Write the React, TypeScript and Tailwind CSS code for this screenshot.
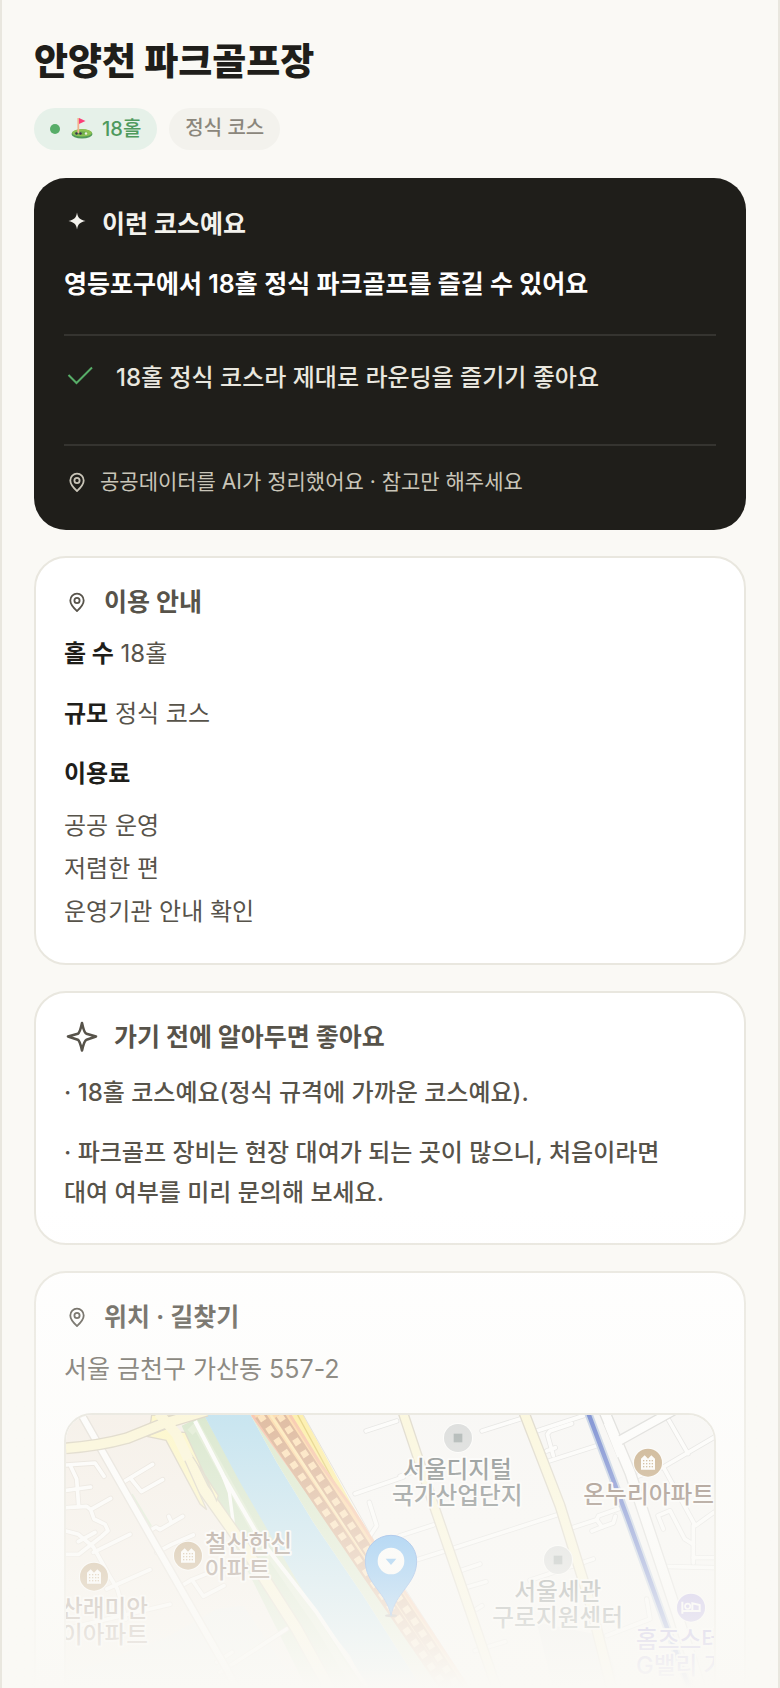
import React from 'react';

type IconProps = { className?: string };

const PinIcon = ({ className }: IconProps) => (
  <svg viewBox="0 0 26 26" fill="none" stroke="currentColor" strokeWidth="1.8" className={`h-[26px] w-[26px] shrink-0 ${className ?? ''}`} aria-hidden="true">
    <path d="M13 22c-3.2-3-6.700-6.200-6.700-10.600a6.700 6.700 0 0 1 13.400 0C19.700 15.800 16.200 19 13 22z" strokeLinejoin="round" />
    <circle cx="13" cy="11.500" r="2.600" />
  </svg>
);

const SparkIcon = () => (
  <svg viewBox="0 0 26 26" fill="currentColor" className="h-[26px] w-[26px] shrink-0" aria-hidden="true">
    <path d="M13 1.500c1 5.500 2.500 7 8.500 8.500-6 1.500-7.500 3-8.500 8.500-1-5.500-2.500-7-8.500-8.500 6-1.500 7.500-3 8.500-8.500z" />
  </svg>
);

const SparkOutlineIcon = () => (
  <svg viewBox="0 0 34 34" fill="none" stroke="currentColor" strokeWidth="2.600" strokeLinejoin="round" className="h-[34px] w-[34px] shrink-0" aria-hidden="true">
    <path d="M18 3c1.600 7.500 3.500 10.500 4.500 10.800L32 16.500l-9.500 3.200c-1.500.6-3 4-4.500 10.800-1.500-6.800-2.800-10-4.200-10.800L4 16.500l9.800-2.700C15.200 13 16.500 10 18 3z" />
  </svg>
);

const CheckIcon = () => (
  <svg viewBox="0 0 32 32" fill="none" stroke="#57ad68" strokeWidth="2" className="h-8 w-8 shrink-0" aria-hidden="true">
    <path d="M4.500 13l8 8L28 5.500" />
  </svg>
);

const GolfIcon = () => (
  <svg viewBox="0 0 24 24" className="h-6 w-6 shrink-0" aria-hidden="true">
    <ellipse cx="12" cy="17" rx="10.500" ry="4.500" fill="#4f9a58" />
    <ellipse cx="12" cy="15.800" rx="10" ry="3.700" fill="#8cc152" />
    <ellipse cx="11" cy="16" rx="6.500" ry="1.800" fill="#6fae4d" />
    <path d="M8.300 1v15" stroke="#f2b28c" strokeWidth="1.800" />
    <path d="M9 1l6.500 3L9 7z" fill="#fb3f78" />
    <circle cx="6.500" cy="16.500" r="1.200" fill="#3e3350" />
    <circle cx="10.500" cy="16.500" r="1.200" fill="#3e3350" />
    <circle cx="16" cy="16.500" r="1.200" fill="#e9efe4" />
  </svg>
);

type CardProps = {
  title: string;
  icon: React.ReactNode;
  gap?: string;
  children: React.ReactNode;
};

const Card = ({ title, icon, gap = 'gap-[14px]', children }: CardProps) => (
  <section className="rounded-[32px] border-2 border-[#e9e7df] bg-white px-7 pt-7 pb-[30px]">
    <h2 className={`flex h-8 items-center text-[25px] leading-8 font-bold text-[#57534a] ${gap}`}>
      {icon}
      {title}
    </h2>
    {children}
  </section>
);

const leftLanes = [
  'M108 618L195 612L222 652',
  'M122 622L140 660L146 742',
  'M108 694L182 684',
  'M108 746L170 742L182 752L192 780L225 796L234 815L215 832L146 886L108 886',
  'M182 752L242 718',
  'M108 816L145 826L190 864L238 950L262 990L288 1080',
  'M145 848L195 820',
  'M190 880L300 826',
  'M272 674L368 616',
  'M302 658L334 698L398 662',
  'M350 820L378 804L390 812L458 772',
  'M424 790L416 772',
  'M380 880L425 856L490 828',
  'M448 984L486 962L520 1012L582 980',
  'M486 962L540 940',
  'M230 990L360 932',
  'M108 1110L420 1036',
  'M570 1240L770 1110',
  'M560 1210L606 1180',
];

const rightLanes = [
  'M1356 516L1470 480',
  'M1008 516L1100 486',
  'M975 704L1120 654',
  'M1018 730L1040 800L1020 830',
  'M1110 652L1150 638',
  'M1110 830L1210 798',
  'M1130 912L1270 868L1580 768',
  'M1500 964L1690 900',
  'M1290 935L1350 915',
  'M1310 985L1368 968',
  'M1340 1050L1356 1040',
  'M1520 516L1660 470',
  'M1625 494L1560 516L1552 526L1570 590',
  'M1550 608L1700 560',
  'M1550 576L1576 566',
  'M1615 810L1700 782L1706 770L1770 748',
  'M1700 782L1716 804L1686 816',
  'M1716 804L1750 792L1756 772',
  'M1800 660L1900 624L2052 535',
  'M1912 476L1974 584',
  'M1902 628L1996 800L2052 760',
  'M1900 810L1884 770L1920 755L1964 840L1990 856',
  'M1990 800L1990 912',
  'M1895 922L2052 926',
  'M1990 896L2052 896',
  'M1730 1130L1860 1080L1850 1020',
  'M1335 1175L1425 1148',
];

const Lanes = ({ paths, edge, width }: { paths: string[]; edge: string; width: number }) => (
  <g fill="none" strokeLinecap="round" strokeLinejoin="round">
    {paths.map((d) => (
      <path key={d} d={d} stroke={edge} strokeWidth={width + 5} />
    ))}
    {paths.map((d) => (
      <path key={d} d={d} stroke="#fff" strokeWidth={width} />
    ))}
  </g>
);

const Road = ({ d, width, fill, edge }: { d: string; width: number; fill: string; edge: string }) => (
  <g fill="none" strokeLinejoin="round">
    <path d={d} stroke={edge} strokeWidth={width + 8} />
    <path d={d} stroke={fill} strokeWidth={width} />
  </g>
);

const ApartmentMarker = ({ x, y }: { x: number; y: number }) => (
  <g transform={`translate(${x} ${y})`}>
    <circle r="45" fill="#fff" />
    <circle r="42" fill="#ab834c" />
    <path d="M-21 21V-12L-10 -22L0 -12L10 -22L21 -12V21z" fill="#fff" />
    {[-6, 3, 12].map((row) =>
      [-13, -4, 5, 13].map((col) => <rect key={`${row}${col}`} x={col - 2} y={row - 2} width="4" height="4" fill="#ab834c" />),
    )}
  </g>
);

const PlaceMarker = ({ x, y }: { x: number; y: number }) => (
  <g transform={`translate(${x} ${y})`}>
    <circle r="45" fill="#fff" />
    <circle r="42" fill="#c8cbcc" />
    <rect x="-13" y="-13" width="26" height="26" fill="#7d8a8a" />
  </g>
);

const mapLabels = [
  { text: '서울디지털', x: 1282, y: 656, color: '#3e484a', anchor: 'middle' },
  { text: '국가산업단지', x: 1282, y: 735, color: '#3e484a', anchor: 'middle' },
  { text: '온누리아파트', x: 1856, y: 731, color: '#5e4232', anchor: 'middle' },
  { text: '철산한신', x: 525, y: 879, color: '#5e4232', anchor: 'start' },
  { text: '아파트', x: 525, y: 958, color: '#5e4232', anchor: 'start' },
  { text: '산래미안', x: 354, y: 1073, color: '#5e4232', anchor: 'end' },
  { text: '이아파트', x: 354, y: 1152, color: '#5e4232', anchor: 'end' },
  { text: '서울세관', x: 1583, y: 1022, color: '#3e484a', anchor: 'middle' },
  { text: '구로지원센터', x: 1583, y: 1101, color: '#3e484a', anchor: 'middle' },
  { text: '홈즈스테이', x: 1818, y: 1167, color: '#5a4bc4', anchor: 'start' },
  { text: 'G밸리 가산', x: 1818, y: 1246, color: '#5a4bc4', anchor: 'start' },
] as const;

const LocationMap = () => (
  <svg viewBox="108 468 1944 960" preserveAspectRatio="xMidYMin slice" className="block h-80 w-full" role="img" aria-label="안양천 파크골프장 지도">
    <rect x="108" y="468" width="1944" height="960" fill="#f7f6f5" />
    <path d="M108 468H560L1010 1428H108z" fill="#f3ebe2" />
    <path d="M108 1250L420 1130L560 1050L640 1040L900 1428H108z" fill="#e9ecea" />
    <path d="M1520 1090L1720 1130L1760 1250L1570 1290z" fill="#e4e6e8" />
    <path d="M292 716L308 704L366 800L350 816z" fill="#cfe3c2" />
    <path d="M455 500L522 468L850 1050L1010 1284L1080 1428H900L600 830z" fill="#c4dcb4" />
    <path d="M480 520L500 500L700 860L860 1090L1000 1320" fill="none" stroke="#d5e6c5" strokeWidth="22" />
    <path d="M522 468H662L740 610L850 790L1000 1010L1140 1230L1260 1428H1080L960 1190L850 1050L740 860L630 670z" fill="#a3d6ec" />
    <path d="M662 468L860 740L1000 930L1140 1130L1330 1428H1260L1140 1230L1000 1010L850 790L740 610z" fill="#cce0b8" />
    <path d="M785 468H820L1000 800L960 780z" fill="#ffe97d" />
    <path d="M820 468L1035 850L1300 1260" fill="none" stroke="#d3cfc4" strokeWidth="3" />
    <path d="M803 468L1010 850" fill="none" stroke="#d9bb3c" strokeWidth="4" />

    <Lanes paths={leftLanes} edge="#ddd5cb" width={11} />
    <Lanes paths={rightLanes} edge="#d9d9d8" width={11} />
    <Road d="M155 468L370 846L590 1230L690 1428" width={18} fill="#fff" edge="#dcd6cd" />

    <g fill="none" stroke="#fff" strokeLinejoin="round">
      <path d="M495 486L580 650L690 840L860 1060L1010 1284" strokeWidth="12" />
      <path d="M575 640L598 700L612 810" strokeWidth="10" />
      <path d="M810 660L1080 1060L1250 1310" strokeWidth="6" />
    </g>

    <Road d="M440 526L520 690L640 860L800 1110L960 1400" width={30} fill="#fdf5c3" edge="#cdc4ac" />
    <path d="M365 468L362 490L345 510L430 482L440 468z" fill="#fff6b0" stroke="#cdc4ac" strokeWidth="4" />
    <path d="M350 532L408 544L510 735L530 752L420 505zM440 520L565 710L560 725L465 520z" fill="#fff6b0" stroke="#cdc4ac" strokeWidth="4" />
    <Road d="M108 568C190 562 240 552 290 538L400 494L530 455" width={28} fill="#fcf5ca" edge="#cdc4ac" />
    <path d="M385 462L440 526L475 600" fill="none" stroke="#fcf5ca" strokeWidth="30" />

    <path d="M662 468H785L870 610L970 750L1120 990L1200 1110L1410 1428H1340L1140 1130L1000 930L860 740z" fill="#ffc982" />
    <g fill="none">
      <path d="M667 468L862 740L1002 930L1142 1130L1342 1428" stroke="#f5a585" strokeWidth="9" />
      <path d="M780 468L868 610L968 750L1118 990L1198 1110L1408 1428" stroke="#f7ab7f" strokeWidth="9" />
      <path d="M722 468L900 735L1040 940L1370 1428" stroke="#ffe19a" strokeWidth="8" />
      <path d="M690 468L1010 940L1345 1428" stroke="#cc9065" strokeWidth="34" />
      <path d="M690 468L1010 940L1345 1428" stroke="#ffd69b" strokeWidth="20" strokeDasharray="20 23" />
      <path d="M748 468L1010 870L1380 1428" stroke="#cc9065" strokeWidth="32" />
      <path d="M748 468L1010 870L1380 1428" stroke="#ffd69b" strokeWidth="20" strokeDasharray="20 23" />
    </g>

    <Road d="M1117 455L1205 720L1390 1260L1450 1428" width={24} fill="#fcf6cf" edge="#cfc8b4" />
    <Road d="M1480 455L1590 740L1680 1030L1780 1428" width={26} fill="#fcf6cf" edge="#cfc8b4" />
    <Road d="M1722 455L1800 640L1940 1060L2040 1380" width={28} fill="#fff" edge="#d0d0ce" />
    <Road d="M1768 545L1930 455" width={24} fill="#fff" edge="#cfcfcd" />
    <path d="M1735 490L1775 590" stroke="#fff" strokeWidth="28" />
    <g fill="none">
      <path d="M1672 455L1790 770L1905 1090L1990 1320" stroke="#a9bddb" strokeWidth="24" />
      <path d="M1672 455L1790 770L1905 1090L1990 1320" stroke="#2d4dbd" strokeWidth="13" />
    </g>

    <PlaceMarker x={1284} y={537} />
    <PlaceMarker x={1584} y={903} />
    <ApartmentMarker x={1854} y={611} />
    <ApartmentMarker x={474} y={890} />
    <ApartmentMarker x={192} y={953} />
    <g transform="translate(1983 1046)">
      <circle r="45" fill="#fff" />
      <circle r="42" fill="#8b7bdd" />
      <path d="M-26 -18V18M-26 10H26V-8L4 -13V10" fill="none" stroke="#fff" strokeWidth="6" />
      <circle cx="-10" cy="-4" r="8" fill="none" stroke="#fff" strokeWidth="5" />
    </g>

    <g fontSize="71" fontWeight="500" stroke="#fff" strokeWidth="11" strokeLinejoin="round" paintOrder="stroke">
      {mapLabels.map(({ text, x, y, color, anchor }) => (
        <text key={text} x={x} y={y} fill={color} textAnchor={anchor}>
          {text}
        </text>
      ))}
    </g>

    <ellipse cx="1083" cy="1070" rx="18" ry="5" fill="#77706a" />
    <path d="M1083 1070C1070 1000 1006 975 1006 906a77 77 0 0 1 154 0C1160 975 1096 1000 1083 1070z" fill="#2a95f2" stroke="#1668d8" strokeWidth="3" />
    <circle cx="1083" cy="906" r="40" fill="#fff" />
    <path d="M1067 899H1099L1083 918z" fill="#2a95f2" />
  </svg>
);

const fees = ['공공 운영', '저렴한 편', '운영기관 안내 확인'];

export default function App() {
  return (
    <div className="relative h-screen overflow-hidden border-x-2 border-[#e9e7df] bg-[#faf9f5] px-8 pt-9 font-[Inter,'Noto_Sans_CJK_KR',sans-serif] break-keep text-[#1f1e1a]">
      <header>
        <h1 className="text-[37px] leading-[52px] font-extrabold">안양천 파크골프장</h1>
        <div className="mt-5 flex gap-3 text-xl leading-10 font-medium">
          <span className="flex h-[42px] items-center gap-[10px] rounded-full bg-[#e6f1e9] px-4 text-[#4f9a5e]">
            <span className="h-[10px] w-[10px] rounded-full bg-[#57ad68]" />
            <span className="flex items-center gap-2">
              <GolfIcon />
              18홀
            </span>
          </span>
          <span className="h-[42px] rounded-full bg-[#f3f2ed] px-4 text-[#8b877c]">정식 코스</span>
        </div>
      </header>

      <main className="mt-7 flex flex-col gap-[26px]">
        <section className="rounded-[32px] bg-[#1f1e1a] px-[30px] pt-[30px] pb-8">
          <h2 className="flex h-8 items-center gap-3 text-[25px] leading-8 font-bold text-[#f3f2ed]">
            <SparkIcon />
            이런 코스예요
          </h2>
          <p className="mt-6 text-[25px] leading-10 font-semibold text-white">영등포구에서 18홀 정식 파크골프를 즐길 수 있어요</p>
          <ul className="mt-[30px] border-t-2 border-[#353430] pt-[22px] pb-[46px]">
            <li className="flex items-center gap-5 text-2xl leading-10 font-medium text-[#e9e7df]">
              <CheckIcon />
              18홀 정식 코스라 제대로 라운딩을 즐기기 좋아요
            </li>
          </ul>
          <p className="flex items-center gap-[10px] border-t-2 border-[#353430] pt-5 text-[21px] leading-8 text-[#c9c5b8]">
            <PinIcon />
            공공데이터를 AI가 정리했어요 · 참고만 해주세요
          </p>
        </section>

        <Card title="이용 안내" icon={<PinIcon />}>
          <div className="mt-4 flex flex-col gap-5 text-2xl leading-10 text-[#57534a]">
            <p>
              <strong className="font-bold text-[#1f1e1a]">홀 수</strong> 18홀
            </p>
            <p>
              <strong className="font-bold text-[#1f1e1a]">규모</strong> 정식 코스
            </p>
            <p>
              <strong className="font-bold text-[#1f1e1a]">이용료</strong>
            </p>
          </div>
          <ul className="mt-[10px] text-2xl leading-[43px] text-[#57534a]">
            {fees.map((fee) => (
              <li key={fee}>{fee}</li>
            ))}
          </ul>
        </Card>

        <Card title="가기 전에 알아두면 좋아요" icon={<SparkOutlineIcon />} gap="gap-4">
          <div className="mt-5 flex flex-col gap-5 pr-5 text-2xl leading-10 font-medium text-[#57534a]">
            <p>· 18홀 코스예요(정식 규격에 가까운 코스예요).</p>
            <p>· 파크골프 장비는 현장 대여가 되는 곳이 많으니, 처음이라면 대여 여부를 미리 문의해 보세요.</p>
          </div>
        </Card>

        <Card title="위치 · 길찾기" icon={<PinIcon />}>
          <p className="mt-4 text-[25px] leading-10 text-[#57534a]">서울 금천구 가산동 557-2</p>
          <div className="mt-6 overflow-hidden rounded-[28px] border-2 border-[#e0ded4]">
            <LocationMap />
          </div>
        </Card>
      </main>

      {/* fades the cut-off content into the page */}
      <div className="pointer-events-none absolute inset-x-0 bottom-0 h-[480px] bg-linear-to-b from-[#faf9f5]/0 to-[#faf9f5]" />
    </div>
  );
}
